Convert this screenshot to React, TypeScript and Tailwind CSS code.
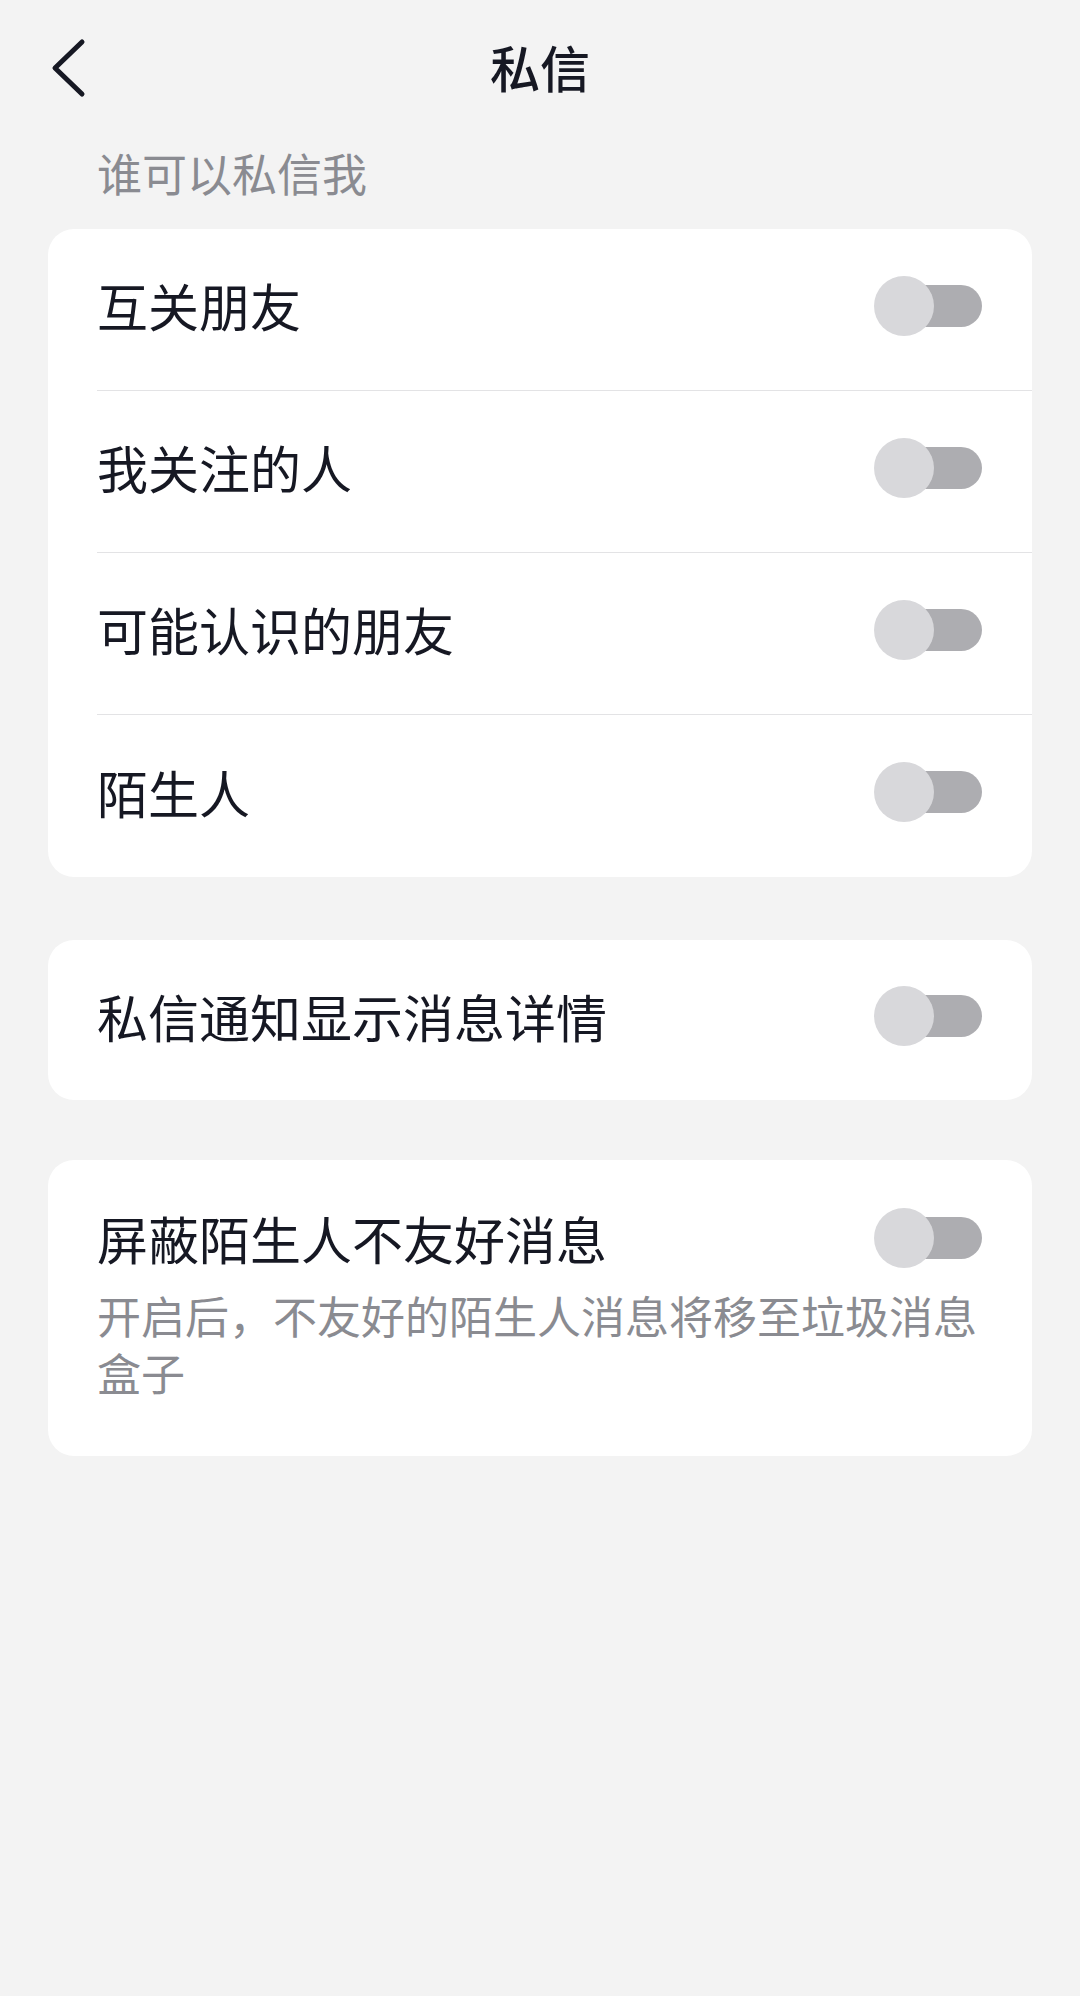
import React from "react";

const font = { fontFamily: '"Noto Sans CJK SC", "Noto Sans", sans-serif' };

function Toggle() {
  return (
    <div className="relative h-[60px] w-[108px] shrink-0">
      <div className="absolute right-0 top-[9px] h-[42px] w-[90px] rounded-full bg-[#adadb1]" />
      <div className="absolute left-0 top-0 h-[60px] w-[60px] rounded-full bg-[#d8d8db]" />
    </div>
  );
}

function Row({ label, last }: { label: string; last?: boolean }) {
  return (
    <div
      className={`ml-[49px] flex h-[162px] items-center justify-between pb-[8px] pr-[50px] ${last ? "" : "border-b border-[#e3e3e5]"}`}
    >
      <span className="text-[51px] leading-none text-[#161823]">{label}</span>
      <Toggle />
    </div>
  );
}

export default function App() {
  const who = ["互关朋友", "我关注的人", "可能认识的朋友", "陌生人"];

  return (
    <div className="min-h-[1996px] w-[1080px] bg-[#f3f3f3]" style={font}>
      <header className="relative flex h-[140px] items-center justify-center pb-[8px]">
        <button type="button" className="absolute left-[46px] top-[36px] p-0" aria-label="返回">
          <svg width="44" height="66" viewBox="0 0 44 66" fill="none">
            <polyline
              points="36,6 9,32 36,58"
              stroke="#161823"
              strokeWidth="5"
              strokeLinecap="round"
              strokeLinejoin="round"
            />
          </svg>
        </button>
        <h1 className="text-[50px] font-medium leading-none text-[#161823]">私信</h1>
      </header>

      <div className="mt-[5px] mb-[28px] pl-[97px] text-[45px] leading-[56px] text-[#8a8b91]">谁可以私信我</div>

      <div className="mx-[48px] overflow-hidden rounded-[26px] bg-white">
        {who.map((w, i) => (
          <Row key={w} label={w} last={i === who.length - 1} />
        ))}
      </div>

      <div className="mx-[48px] mt-[63px] rounded-[26px] bg-white">
        <div className="ml-[49px] flex h-[160px] items-center justify-between pb-[8px] pr-[50px]">
          <span className="text-[51px] leading-none text-[#161823]">私信通知显示消息详情</span>
          <Toggle />
        </div>
      </div>

      <div className="mx-[48px] mt-[60px] rounded-[26px] bg-white pb-[55px] pl-[49px] pr-[50px] pt-[47px]">
        <div className="flex h-[62px] items-center justify-between">
          <span className="text-[51px] leading-none text-[#161823]">屏蔽陌生人不友好消息</span>
          <Toggle />
        </div>
        <p className="mt-[18px] text-[44px] leading-[57px] text-[#8a8b91]">
          开启后，不友好的陌生人消息将移至垃圾消息盒子
        </p>
      </div>
    </div>
  );
}
